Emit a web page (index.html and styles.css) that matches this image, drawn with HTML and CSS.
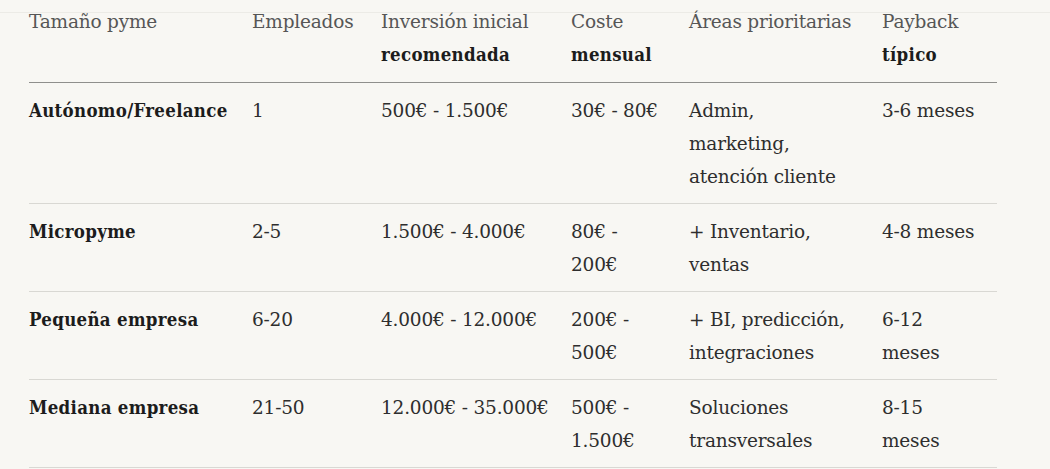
FILE: index.html
```html
<!DOCTYPE html>
<html lang="es">
<head>
<meta charset="utf-8">
<title>Tabla pyme</title>
<link rel="stylesheet" href="styles.css">
</head>
<body>
<div class="wrap">
  <table class="pyme-table">
    <colgroup>
      <col class="c1"><col class="c2"><col class="c3"><col class="c4"><col class="c5"><col class="c6">
    </colgroup>
    <thead>
      <tr>
        <th>Tamaño pyme</th>
        <th>Empleados</th>
        <th>Inversión inicial recomendada</th>
        <th>Coste mensual</th>
        <th>Áreas prioritarias</th>
        <th>Payback típico</th>
      </tr>
    </thead>
    <tbody>
      <tr>
        <td class="name">Autónomo/Freelance</td>
        <td>1</td>
        <td>500€ - 1.500€</td>
        <td>30€ - 80€</td>
        <td>Admin, marketing, atención cliente</td>
        <td>3-6 meses</td>
      </tr>
      <tr>
        <td class="name">Micropyme</td>
        <td>2-5</td>
        <td>1.500€ - 4.000€</td>
        <td>80€ - 200€</td>
        <td>+ Inventario, ventas</td>
        <td>4-8 meses</td>
      </tr>
      <tr>
        <td class="name">Pequeña empresa</td>
        <td>6-20</td>
        <td>4.000€ - 12.000€</td>
        <td>200€ - 500€</td>
        <td>+ BI, predicción, integraciones</td>
        <td>6-12 meses</td>
      </tr>
      <tr>
        <td class="name">Mediana empresa</td>
        <td>21-50</td>
        <td>12.000€ - 35.000€</td>
        <td>500€ - 1.500€</td>
        <td>Soluciones transversales</td>
        <td>8-15 meses</td>
      </tr>
    </tbody>
  </table>
</div>
</body>
</html>
```
FILE: styles.css
```css
html, body {
  margin: 0;
  padding: 0;
}
body {
  background-color: #f8f7f3;
  background-image: linear-gradient(to bottom, transparent 12px, #ecebe6 12px, #ecebe6 13px, transparent 13px);
  background-repeat: no-repeat;
  font-family: "DejaVu Serif", "Liberation Serif", serif;
  font-size: 18.5px;
  color: #2e2e2e;
  letter-spacing: -0.2px;
}
.wrap {
  padding: 5px 0 0 29px;
}
.pyme-table {
  width: 968px;
  border-collapse: collapse;
  table-layout: fixed;
}
.c1 { width: 223px; }
.c2 { width: 129px; }
.c3 { width: 190px; }
.c4 { width: 118px; }
.c5 { width: 193px; }
.c6 { width: 115px; }
.pyme-table th,
.pyme-table td {
  text-align: left;
  vertical-align: top;
  line-height: 33px;
  padding-right: 24px;
  padding-left: 0;
}
.pyme-table th:nth-child(3),
.pyme-table td:nth-child(3) {
  padding-right: 16px;
}
.pyme-table th:nth-child(6),
.pyme-table td:nth-child(6) {
  padding-right: 18px;
}
.pyme-table th {
  font-family: "DejaVu Serif Condensed", "DejaVu Serif", serif;
  font-stretch: condensed;
  font-weight: 700;
  letter-spacing: 0.3px;
  color: #1c1c1c;
  padding-top: 0;
  padding-bottom: 11px;
  border-bottom: 1px solid #8f8f8c;
}
.pyme-table th::first-line {
  font-family: "DejaVu Serif", "Liberation Serif", serif;
  font-stretch: normal;
  font-weight: 400;
  letter-spacing: -0.2px;
  color: #565656;
}
.pyme-table td {
  padding-top: 11px;
  padding-bottom: 10px;
  border-bottom: 1px solid #d9d8d3;
}
.pyme-table td.name {
  font-family: "DejaVu Serif Condensed", "DejaVu Serif", serif;
  font-stretch: condensed;
  font-weight: 700;
  letter-spacing: 0.3px;
  color: #1c1c1c;
}
```
